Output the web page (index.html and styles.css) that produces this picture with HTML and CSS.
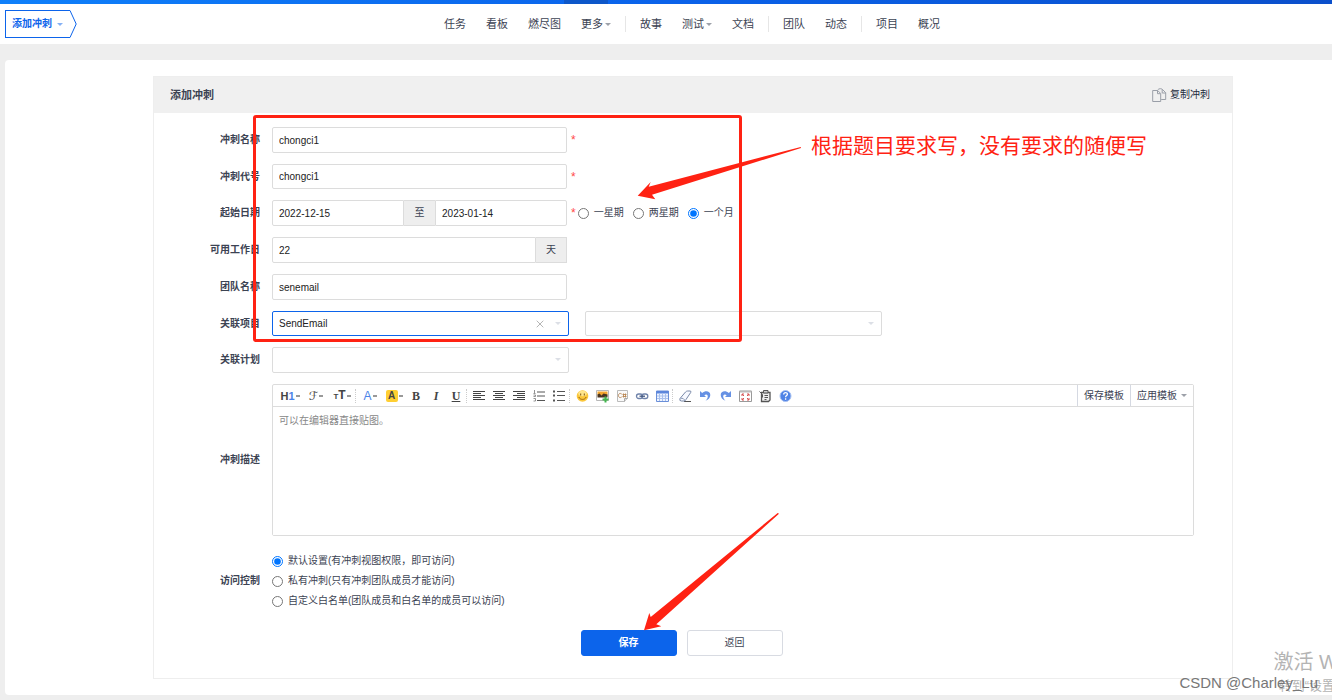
FILE: index.html
```html
<!DOCTYPE html>
<html lang="zh-CN">
<head>
<meta charset="utf-8">
<title>添加冲刺</title>
<link rel="stylesheet" href="styles.css">
</head>
<body>
<div class="page">
  <div class="topstrip"><span class="topstrip-active"></span></div>
  <header class="header">
    <button class="brand" type="button">
      <span>添加冲刺</span><i class="caret"></i>
      <svg class="brand-tip" width="7" height="28" viewBox="0 0 7 28"><path d="M0 .5 6.2 14 0 27.5" fill="#fff" stroke="#0c64eb"/></svg>
    </button>
    <nav class="nav">
      <a href="#">任务</a><a href="#">看板</a><a href="#">燃尽图</a><a href="#">更多<i class="caret"></i></a>
      <span class="nav-sep"></span>
      <a href="#">故事</a><a href="#">测试<i class="caret"></i></a><a href="#">文档</a>
      <span class="nav-sep"></span>
      <a href="#">团队</a><a href="#">动态</a>
      <span class="nav-sep"></span>
      <a href="#">项目</a><a href="#">概况</a>
    </nav>
  </header>

  <main class="main">
    <section class="panel">
      <div class="panel-head">
        <h1>添加冲刺</h1>
        <a class="copy" href="#">
          <svg width="15" height="14" viewBox="0 0 15 14" fill="none" stroke="#9a9fa8"><path d="M.7 2.5h5l3 3v8h-8z"/><path d="M5.5 2.7v3h3"/><path d="M5.7 1.9c1.2-1.6 4-1.6 5-.2l3 3v6.800h-4.500M10.200 1.200v3.800h3.500"/></svg>
          复制冲刺
        </a>
      </div>

      <form class="form">
        <div class="row">
          <label class="label" for="name">冲刺名称</label>
          <div class="field"><input class="input third" id="name" type="text" value="chongci1"><span class="star">*</span></div>
        </div>
        <div class="row compact">
          <label class="label" for="code">冲刺代号</label>
          <div class="field"><input class="input third" id="code" type="text" value="chongci1"><span class="star">*</span></div>
        </div>
        <div class="row">
          <label class="label" for="begin">起始日期</label>
          <div class="field">
            <div class="group third">
              <input class="input" id="begin" type="text" value="2022-12-15">
              <span class="addon">至</span>
              <input class="input" id="end" type="text" aria-label="结束日期" value="2023-01-14">
            </div>
            <span class="star">*</span>
            <div class="spans">
              <label class="radio"><input type="radio" name="span">一星期</label>
              <label class="radio"><input type="radio" name="span">两星期</label>
              <label class="radio"><input type="radio" name="span" checked>一个月</label>
            </div>
          </div>
        </div>
        <div class="row">
          <label class="label" for="days">可用工作日</label>
          <div class="field">
            <div class="group third">
              <input class="input" id="days" type="text" value="22">
              <span class="addon">天</span>
            </div>
          </div>
        </div>
        <div class="row">
          <label class="label" for="team">团队名称</label>
          <div class="field"><input class="input third" id="team" type="text" value="senemail"></div>
        </div>
        <div class="row compact">
          <label class="label" for="project">关联项目</label>
          <div class="field selects">
            <div class="picker active">
              <select id="project"><option>SendEmail</option></select>
              <button class="clear" type="button" aria-label="清除"><svg width="8" height="8" viewBox="0 0 8 8"><path d="M.7.7l6.600 6.600M7.300.7.7 7.300" stroke="#b5b5b5"/></svg></button>
            </div>
            <div class="picker"><select aria-label="分支"><option></option></select></div>
          </div>
        </div>
        <div class="row">
          <label class="label" for="plan">关联计划</label>
          <div class="field selects"><div class="picker"><select id="plan"><option></option></select></div></div>
        </div>

        <div class="row tall">
          <label class="label" for="desc">冲刺描述</label>
          <div class="editor">
            <div class="toolbar">
              <button class="tool wide" type="button" aria-label="标题"><b class="t-h">H<em>1</em></b><i class="dash"></i></button>
              <button class="tool wide" type="button" aria-label="字体"><span class="t-f">ℱ</span><i class="dash"></i></button>
              <button class="tool wide" type="button" aria-label="字号"><span class="t-t"><small>T</small>T</span><i class="dash"></i></button>
              <span class="tool-sep"></span>
              <button class="tool mid" type="button" aria-label="文字颜色"><span class="t-a">A</span><i class="dash"></i></button>
              <button class="tool mid" type="button" aria-label="背景颜色"><span class="t-bg">A</span><i class="dash"></i></button>
              <button class="tool" type="button" aria-label="粗体"><span class="t-s">B</span></button>
              <button class="tool" type="button" aria-label="斜体"><span class="t-s t-i">I</span></button>
              <button class="tool" type="button" aria-label="下划线"><span class="t-s t-u">U</span></button>
              <span class="tool-sep"></span>
              <button class="tool" type="button" aria-label="左对齐"><svg viewBox="0 0 16 16"><path d="M2 3.500h12M2 5.500h8M2 7.500h12M2 9.500h8M2 11.500h12" stroke="#444"/></svg></button>
              <button class="tool" type="button" aria-label="居中"><svg viewBox="0 0 16 16"><path d="M2 3.500h12M4 5.500h8M2 7.500h12M4 9.500h8M2 11.500h12" stroke="#444"/></svg></button>
              <button class="tool" type="button" aria-label="右对齐"><svg viewBox="0 0 16 16"><path d="M2 3.500h12M6 5.500h8M2 7.500h12M6 9.500h8M2 11.500h12" stroke="#444"/></svg></button>
              <button class="tool" type="button" aria-label="编号列表"><svg viewBox="0 0 16 16"><path d="M6 4h8M6 8h8M6 12.500h8" stroke="#555"/><path d="M3.500 2v3M2.500 5.500h2M2.500 7h2v1.500h-2M2.500 10.500h2v2.500h-2" fill="none" stroke="#777" stroke-width=".8"/></svg></button>
              <button class="tool" type="button" aria-label="项目列表"><svg viewBox="0 0 16 16"><path d="M6 3.500h8M6 7.500h8M6 12.500h8" stroke="#555"/><path d="M2 2.500h2v2H2zM2 6.500h2v2H2zM2 11.500h2v2H2z" fill="#555"/></svg></button>
              <span class="tool-sep"></span>
              <button class="tool" type="button" aria-label="表情"><svg viewBox="0 0 16 16"><circle cx="8.500" cy="8" r="5.800" fill="#fbc73b"/><ellipse cx="8.500" cy="5.500" rx="4.200" ry="2.800" fill="#fee58c"/><path d="M6.700 5.500v2M10.300 5.500v2" stroke="#7c5314"/><path d="M4.800 9c1.200 3.200 6.200 3.200 7.400 0" fill="none" stroke="#9b6512"/></svg></button>
              <button class="tool" type="button" aria-label="图片"><svg viewBox="0 0 16 16"><path d="M2.500 2.500h12v10h-12z" fill="#fff" stroke="#b8b8b8"/><path d="M3.500 3.500h10v4h-10z" fill="#f4a52b"/><path d="M3.500 6.500l2-1 2 2 2-2 4 1v3h-10z" fill="#4a3520"/><path d="M11.500 8.500v6M8.500 11.500h6" stroke="#42b64d" stroke-width="2"/></svg></button>
              <button class="tool" type="button" aria-label="代码"><svg viewBox="0 0 16 16"><path d="M3.500 2.500h10v8l-3 3h-7z" fill="#fafafa" stroke="#bbb"/><path d="M13.500 10.500h-3v3" fill="#ddd" stroke="#aaa"/><path d="M7.700 6c-1.800-1.300-3.200-.3-3.200 1.500s1.400 2.800 3.200 1.500M9.500 5.500v4M11.500 5.500v4M8.500 6.500h4M8.500 8.500h4" fill="none" stroke="#b88652" stroke-width=".9"/></svg></button>
              <button class="tool" type="button" aria-label="链接"><svg viewBox="0 0 16 16" fill="none"><rect x="2.500" y="6" width="6" height="4.500" rx="2.200" stroke="#6f83aa" stroke-width="1.300"/><rect x="7.800" y="6" width="6" height="4.500" rx="2.200" stroke="#6f83aa" stroke-width="1.300"/><path d="M5.500 8.200h5.500" stroke="#43577f" stroke-width="1.300"/></svg></button>
              <button class="tool" type="button" aria-label="表格"><svg viewBox="0 0 16 16"><path d="M2.500 3h12v10.500h-12z" fill="#eef4ff" stroke="#6a8fd8"/><path d="M2.500 3h12v2.500h-12z" fill="#5b86dc"/><path d="M5.500 5v8M8.500 5v8M11.500 5v8M3 8h11M3 10.500h11" stroke="#a9c1ee"/></svg></button>
              <span class="tool-sep"></span>
              <button class="tool" type="button" aria-label="清除格式"><svg viewBox="0 0 16 16"><path d="M7 13.500h7" stroke="#555"/><path d="M3 10.500 8.500 4q1-1 2-1h2.500q1.500 0 .7 1.500L9 11.500q-.8 1.500-2 1.500H4.500Q2 13 3 10.500z" fill="#f7f9ff" stroke="#7888a8"/><path d="M3.500 10.200q3-.6 4.800 2.500" fill="none" stroke="#8d9bb8"/></svg></button>
              <button class="tool" type="button" aria-label="撤销"><svg viewBox="0 0 16 16"><path d="M3 3v6h6L7.300 7.200c2-1.800 4-.4 3.400 2-.3 1.400-1.200 2.500-2.200 3.600 3-1 4.800-3.300 4.800-5.800C13.300 3.200 8.500 2 5.200 5.100z" fill="#6691e4"/></svg></button>
              <button class="tool" type="button" aria-label="重做"><svg viewBox="0 0 16 16"><path d="M14 3v6H8l1.700-1.800c-2-1.800-4-.4-3.400 2 .3 1.400 1.200 2.500 2.200 3.600-3-1-4.800-3.300-4.800-5.800C3.700 3.200 8.500 2 11.800 5.100z" fill="#6691e4"/></svg></button>
              <button class="tool" type="button" aria-label="全屏"><svg viewBox="0 0 16 16"><path d="M2.500 3h12v10.500h-12z" fill="#fff" stroke="#999"/><path d="M2.500 3h12v1.500h-12z" fill="#bbb"/><path d="M5 6l2 2M5 8V6h2M12 6l-2 2M10 6h2v2M5 12l2-2M5 10v2h2M12 12l-2-2M10 12h2v-2" stroke="#d65353" fill="none"/></svg></button>
              <button class="tool" type="button" aria-label="源码"><svg viewBox="0 0 16 16"><path d="M4.500 4.500h8.500v7.500l-1.500 1.500h-7z" fill="#eee" stroke="#555" stroke-width="1.300"/><path d="M6.500 2.500h4.500v2.500H6.500z" fill="#ccc" stroke="#555"/><path d="M2.500 3.500l3 3v3M7.500 7.500h3.500M7.500 9.500h3.500M7.500 11.500h2" fill="none" stroke="#555"/></svg></button>
              <button class="tool" type="button" aria-label="帮助"><svg viewBox="0 0 16 16"><circle cx="8.500" cy="8" r="5.500" fill="#4f83e6" stroke="#a9c2f2"/><path d="M6.700 6.600c0-2.600 3.800-2.500 3.700-.3 0 1.300-1.800 1.300-1.800 2.900M8.600 10.300v1.400" fill="none" stroke="#fff" stroke-width="1.300"/></svg></button>
              <div class="templates">
                <button type="button">保存模板</button>
                <button type="button">应用模板<i class="caret"></i></button>
              </div>
            </div>
            <textarea id="desc" placeholder="可以在编辑器直接贴图。"></textarea>
          </div>
        </div>

        <fieldset class="row access">
          <div class="label">访问控制</div>
          <div class="options">
            <label class="radio"><input type="radio" name="acl" checked>默认设置(有冲刺视图权限，即可访问)</label>
            <label class="radio"><input type="radio" name="acl">私有冲刺(只有冲刺团队成员才能访问)</label>
            <label class="radio"><input type="radio" name="acl">自定义白名单(团队成员和白名单的成员可以访问)</label>
          </div>
        </fieldset>

        <div class="actions">
          <button class="btn primary" type="submit">保存</button>
          <button class="btn" type="button">返回</button>
        </div>
      </form>
    </section>
  </main>

  <div class="notes">
    <div class="note-box"></div>
    <svg class="note-arrows" width="820" height="640" viewBox="0 0 820 640" fill="#ff2213">
      <path d="M637.700 195.700 650.700 182 648.700 186.700 800.700 147 801 148 652 194.700 655.300 199.300z"/>
      <path d="M644 630.300 649.300 613 650.700 617 777.700 513 779 513.700 656.300 624.300 661.300 626.300z"/>
    </svg>
    <p class="note-text">根据题目要求写，没有要求的随便写</p>
    <p class="activate">激活 W</p>
    <p class="activate-sub">转到“设置</p>
    <p class="credit">CSDN @Charley_Lu</p>
  </div>
</div>
</body>
</html>
```

FILE: styles.css
```css
* { box-sizing: border-box; }
body {
  margin: 0;
  background: #eee;
  color: #3c4353;
  font: 10px/20px "Liberation Sans", "Noto Sans CJK SC", sans-serif;
}
button, input, select, textarea { font: inherit; color: inherit; margin: 0; }
button { cursor: pointer; }
a { color: inherit; text-decoration: none; }
.page { position: relative; min-height: 100vh; overflow: hidden; }

.topstrip { height: 4px; background: linear-gradient(90deg, #0f80fa, #0a62ea 50%, #0b4fcb); }
.topstrip-active { display: block; width: 44px; height: 4px; margin-left: 564px; background: #0d57c9; }

.header {
  display: flex;
  align-items: center;
  height: 40px;
  padding: 0 24px 0 5px;
  background: #fff;
}
.brand {
  position: relative;
  display: flex;
  align-items: center;
  gap: 5px;
  width: 65px;
  height: 28px;
  margin-right: 6px;
  padding: 0 0 0 6px;
  border: 1px solid #0c64eb;
  border-right: 0;
  background: #fff;
  color: #0c64eb;
  font-weight: 700;
  white-space: nowrap;
}
.brand-tip { position: absolute; right: -7px; top: -1px; }
.caret {
  display: inline-block;
  flex: none;
  border: 3px solid transparent;
  border-top-color: currentColor;
  border-bottom: 0;
  opacity: .5;
  vertical-align: 2px;
}
.nav { display: flex; flex: 1; justify-content: center; align-items: center; font-size: 11px; white-space: nowrap; }
.nav a { padding: 0 10px; }
.nav .caret { margin-left: 2px; }
.nav-sep { width: 1px; height: 16px; margin: 0 4px; background: #e6e6e6; }

.main { margin: 16px 0 5px 5px; padding: 16px 99px 16px 148px; background: #fff; border-radius: 4px 0 0 4px; }
.panel { border: 1px solid #eee; }
.panel-head {
  display: flex;
  align-items: center;
  justify-content: space-between;
  height: 36px;
  padding: 0 22px 0 16px;
  background: #f0f0f0;
}
.panel-head h1 { margin: 0; font-size: 11px; }
.copy { display: flex; align-items: center; gap: 3px; color: #222c3c; }

.form { display: flex; flex-direction: column; gap: 11px; padding: 14px 38px 22px 0; }
.row { display: flex; align-items: center; gap: 12px; height: 26px; margin: 0; padding: 0; border: 0; }
.row.compact { height: 25px; }
.label { flex: none; width: 106px; text-align: right; font-weight: 700; }
.field { display: flex; flex: 1; align-items: center; height: 100%; }
.input {
  min-width: 0;
  height: 100%;
  padding: 0 6px;
  border: 1px solid #dcdcdc;
  border-radius: 2px;
  background: #fff;
  color: #222;
}
.third { width: 32%; }
.star { padding-left: 4px; color: #ff4a4a; font-size: 12px; }
.group { display: flex; height: 100%; }
.group .input { flex: 1; width: 0; }
.group .input:first-child { border-radius: 2px 0 0 2px; }
.group .input:last-child { border-radius: 0 2px 2px 0; }
.addon {
  display: flex;
  align-items: center;
  justify-content: center;
  width: 31px;
  border: solid #dcdcdc;
  border-width: 1px 0;
  background: #eee;
}
.addon:last-child { border-right-width: 1px; }
.radio { display: flex; align-items: center; gap: 5px; white-space: nowrap; }
.radio input { width: 11px; height: 11px; accent-color: #0075ff; }
.spans { display: flex; gap: 9px; padding-left: 2px; }

.selects { gap: 16px; }
.picker { position: relative; width: 32.2%; height: 100%; }
.picker select {
  width: 100%;
  height: 100%;
  padding: 0 6px;
  appearance: none;
  border: 1px solid #dcdcdc;
  border-radius: 2px;
  background: #fff;
  color: #222;
}
.picker.active select { border-color: #0c64eb; }
.picker::after {
  content: "";
  position: absolute;
  right: 8px;
  top: 11px;
  border: 3px solid transparent;
  border-top-color: #dcdfe6;
  border-bottom: 0;
}
.clear { position: absolute; right: 25px; top: 9px; display: flex; padding: 0; border: 0; background: none; }

.row.tall { height: auto; }
.editor { flex: 1; min-width: 0; border: 1px solid #dcdcdc; border-radius: 2px; }
.toolbar { display: flex; align-items: center; height: 22px; padding-left: 4px; border-bottom: 1px solid #dcdcdc; }
.tool {
  display: flex;
  flex: none;
  align-items: center;
  justify-content: center;
  gap: 1px;
  width: 20px;
  height: 20px;
  padding: 0;
  border: 0;
  background: none;
  color: #444;
}
.tool svg { width: 16px; height: 16px; }
.tool.wide { width: 26px; }
.tool.mid { width: 24px; }
.tool-sep { flex: none; width: 3px; height: 14px; border-left: 1px dotted #ccc; }
.dash { width: 4px; height: 2px; background: #999; }
.t-h { font-size: 11px; }
.t-h em { color: #4c83e8; font-style: normal; }
.t-f { font: 12px/16px "DejaVu Sans", serif; }
.t-t { font-size: 12px; font-weight: 700; }
.t-t small { font-size: 8px; }
.t-a { color: #4c83e8; font-size: 12px; }
.t-bg { width: 12px; height: 12px; border-radius: 2px; background: #ffcf33; font-size: 10px; font-weight: 700; line-height: 12px; }
.t-s { font: bold 12px/14px "Liberation Serif", serif; }
.t-i { font-style: italic; }
.t-u { text-decoration: underline; }
.templates { display: flex; align-self: stretch; margin-left: auto; }
.templates button {
  padding: 0 6px;
  border: 0;
  border-left: 1px solid #d5d9e2;
  background: #fff;
  white-space: nowrap;
}
.templates .caret { margin-left: 4px; }
.editor textarea {
  display: block;
  width: 100%;
  height: 128px;
  padding: 4px 6px;
  border: 0;
  background: #fff;
  resize: none;
}
.editor textarea::placeholder { color: #888; }

.access { height: auto; margin-top: 4px; }
.actions { display: flex; justify-content: center; gap: 10px; margin-top: 8px; padding-left: 15px; }
.btn { width: 96px; height: 26px; border: 1px solid #d8dbe2; border-radius: 3px; background: #fff; }
.btn.primary { border-color: #0c64eb; background: #0c64eb; color: #fff; font-weight: 700; }

/* Annotation layer drawn over the page */
.notes { position: absolute; inset: 0; pointer-events: none; }
.notes p { position: absolute; margin: 0; white-space: nowrap; }
.note-box { position: absolute; left: 253px; top: 115px; width: 489px; height: 227px; border: 3px solid #ff2213; border-radius: 3px; }
.note-arrows { position: absolute; left: 0; top: 0; }
.notes .note-text { left: 811px; top: 131px; color: #ff2213; font-size: 21px; line-height: 30px; }
.notes .activate { right: -6px; top: 648px; color: #b4b4b4; font-size: 20px; line-height: 28px; }
.notes .activate-sub { right: -3px; top: 676px; color: #b4b4b4; font-size: 13px; }
.notes .credit { right: 14px; top: 673px; color: #777; font-size: 15px; }
```
